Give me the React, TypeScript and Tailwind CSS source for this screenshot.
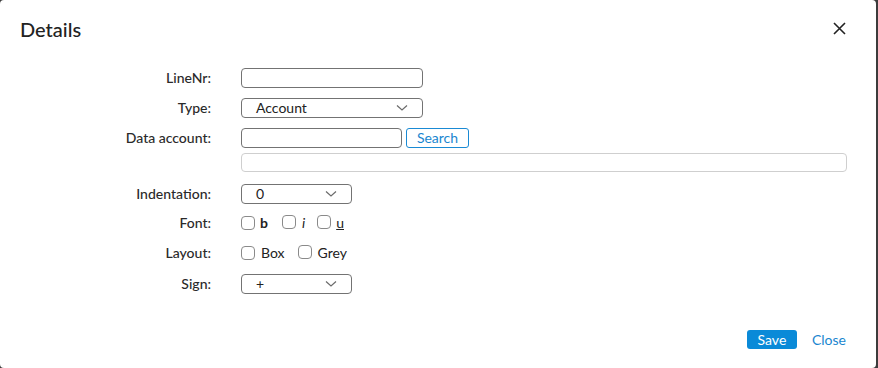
import React from 'react';

function Chevron() {
  return (
    <svg width="12" height="8" viewBox="0 0 12 8" className="shrink-0">
      <path d="M1 1.5 L6 6 L11 1.5" fill="none" stroke="#6b6b6b" strokeWidth="1.2" />
    </svg>
  );
}

function Select({ value, width }: { value: string; width: string }) {
  return (
    <div
      className={`${width} h-[20px] flex items-center justify-between pl-[14px] pr-[14px] border border-[#737373] rounded-[4px] text-[14px] text-[#222] leading-none`}
    >
      <span>{value}</span>
      <Chevron />
    </div>
  );
}

function Checkbox() {
  return <span className="inline-block w-[14px] h-[14px] border border-[#8a8a8a] rounded-[4px] bg-white shrink-0" />;
}

function Label({ children }: { children: React.ReactNode }) {
  return <div className="text-right text-[14px] text-[#2a2a2a] font-medium leading-none">{children}</div>;
}

export default function App() {
  return (
    <div className="w-[878px] h-[368px] bg-[#3c3c3c] overflow-hidden" style={{ fontFamily: 'Lato, "Open Sans", sans-serif' }}>
      <div className="w-[876px] h-[368px] bg-white rounded-[4px] flex flex-col">
        {/* Header */}
        <div className="h-[56px] flex items-center justify-between pl-[20px] pr-[30px] pt-[1px]">
          <h1 className="text-[20px] text-[#222] font-medium">Details</h1>
          <svg width="13" height="13" viewBox="0 0 13 13">
            <path d="M1 1 L12 12 M12 1 L1 12" stroke="#222" strokeWidth="1.6" />
          </svg>
        </div>

        {/* Form */}
        <div className="pl-[20px] pr-[29px] pt-[12px] grid grid-cols-[191px_1fr] gap-x-[30px] items-center">
          <Label>LineNr:</Label>
          <div className="h-[20px] w-[182px] border border-[#737373] rounded-[4px]" />

          <div className="col-span-2 h-[10px]" />
          <Label>Type:</Label>
          <Select value="Account" width="w-[182px]" />

          <div className="col-span-2 h-[10px]" />
          <Label>Data account:</Label>
          <div className="flex items-center gap-[4px]">
            <div className="h-[20px] w-[161px] border border-[#737373] rounded-[4px]" />
            <div className="h-[20px] w-[63px] border border-[#1a8ad4] rounded-[3px] text-[#1a86cf] text-[14px] flex items-center justify-center leading-none">
              Search
            </div>
          </div>

          <div className="col-span-2 h-[5px]" />
          <div />
          <div className="h-[19px] border border-[#cfcfcf] rounded-[4px]" />

          <div className="col-span-2 h-[12px]" />
          <Label>Indentation:</Label>
          <Select value="0" width="w-[111px]" />

          <div className="col-span-2 h-[9px]" />
          <Label>Font:</Label>
          <div className="h-[20px] flex items-center text-[14px] text-[#222] leading-none">
            <Checkbox />
            <span className="ml-[5px] font-bold">b</span>
            <span className="ml-[14px]"><Checkbox /></span>
            <span className="ml-[6px] italic">i</span>
            <span className="ml-[12px]"><Checkbox /></span>
            <span className="ml-[5px] underline">u</span>
          </div>

          <div className="col-span-2 h-[10px]" />
          <Label>Layout:</Label>
          <div className="h-[20px] flex items-center text-[14px] text-[#222] leading-none">
            <Checkbox />
            <span className="ml-[6px]">Box</span>
            <span className="ml-[13px]"><Checkbox /></span>
            <span className="ml-[6px]">Grey</span>
          </div>

          <div className="col-span-2 h-[11px]" />
          <Label>Sign:</Label>
          <Select value="+" width="w-[111px]" />
        </div>

        {/* Footer */}
        <div className="mt-auto mb-[19px] flex items-center justify-end pr-[30px] gap-[15px]">
          <div className="h-[19px] w-[50px] bg-[#0a8ad8] rounded-[3px] text-white text-[14px] flex items-center justify-center leading-none">
            Save
          </div>
          <span className="text-[14px] text-[#1a86cf] leading-none">Close</span>
        </div>
      </div>
    </div>
  );
}
